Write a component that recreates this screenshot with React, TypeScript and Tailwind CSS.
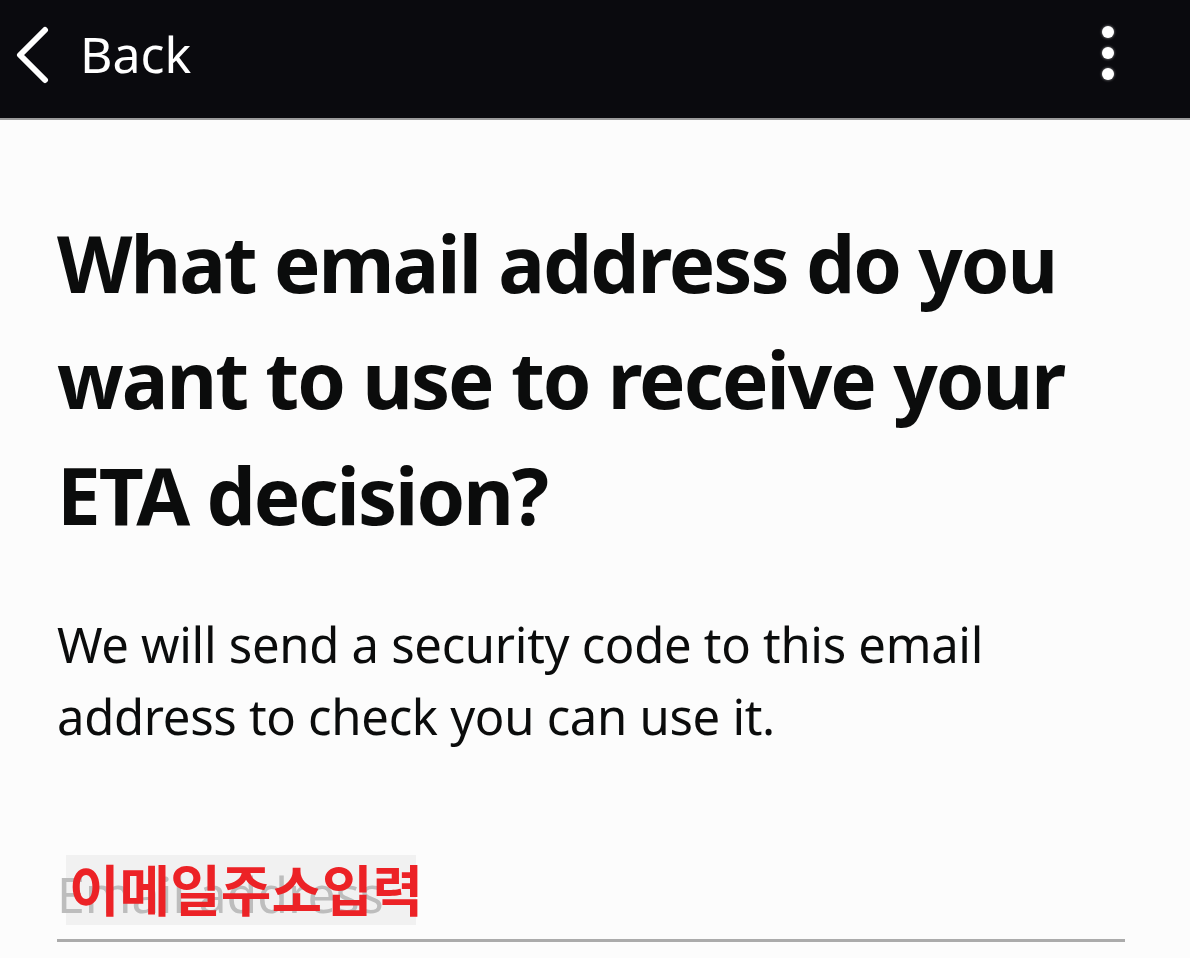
import React from "react";

export default function App() {
  return (
    <div className="w-[1190px] h-[958px] overflow-hidden bg-[#fcfcfc]" style={{ fontFamily: '"Noto Sans", "Noto Sans CJK KR", sans-serif' }}>
      <header className="h-[120px] bg-[#0a0a0e] flex items-center justify-between pl-[14px] pr-[76px] border-b-2 border-[#9a9a9a]">
        <div className="flex items-center gap-[30px] -mt-[8px]">
          <svg width="36" height="58" viewBox="0 0 36 58" fill="none">
            <path d="M31 4 L6 29 L31 54" stroke="white" strokeWidth="6" strokeLinecap="round" strokeLinejoin="round" />
          </svg>
          <span className="text-white text-[50px] leading-none -mt-[2px]">Back</span>
        </div>
        <div className="flex flex-col gap-[9px] -mt-[12px]">
          <span className="block w-[12px] h-[12px] rounded-full bg-white shadow-[0_0_3px_rgba(255,255,255,0.6)]" />
          <span className="block w-[12px] h-[12px] rounded-full bg-white shadow-[0_0_3px_rgba(255,255,255,0.6)]" />
          <span className="block w-[12px] h-[12px] rounded-full bg-white shadow-[0_0_3px_rgba(255,255,255,0.6)]" />
        </div>
      </header>
      <main className="px-[57px] pt-[85px]">
        <h1 className="text-[#0b0c0c] font-bold text-[78px] leading-[116px] tracking-[-2px]">
          What email address do you want to use to receive your ETA decision?
        </h1>
        <p className="mt-[55px] text-[#0b0c0c] text-[49px] leading-[72px] tracking-[-0.3px]">
          We will send a security code to this email address to check you can use it.
        </p>
        <div className="relative mt-[89px] w-[1068px] h-[101px] border-b-[3px] border-[#ababab]">
          <span className="absolute left-[9px] top-[14px] w-[350px] h-[70px] bg-[#f1f1f1]" />
          <span className="absolute left-0 top-[28px] text-[50px] leading-none text-[#bdbdbd]">Email address</span>
          <span className="absolute left-[12px] top-[11px] h-[70px] flex items-center text-[#ec2226] font-bold text-[55px] leading-none" style={{ fontFamily: '"Noto Sans CJK KR", sans-serif' }}>
            이메일주소입력
          </span>
        </div>
      </main>
    </div>
  );
}
